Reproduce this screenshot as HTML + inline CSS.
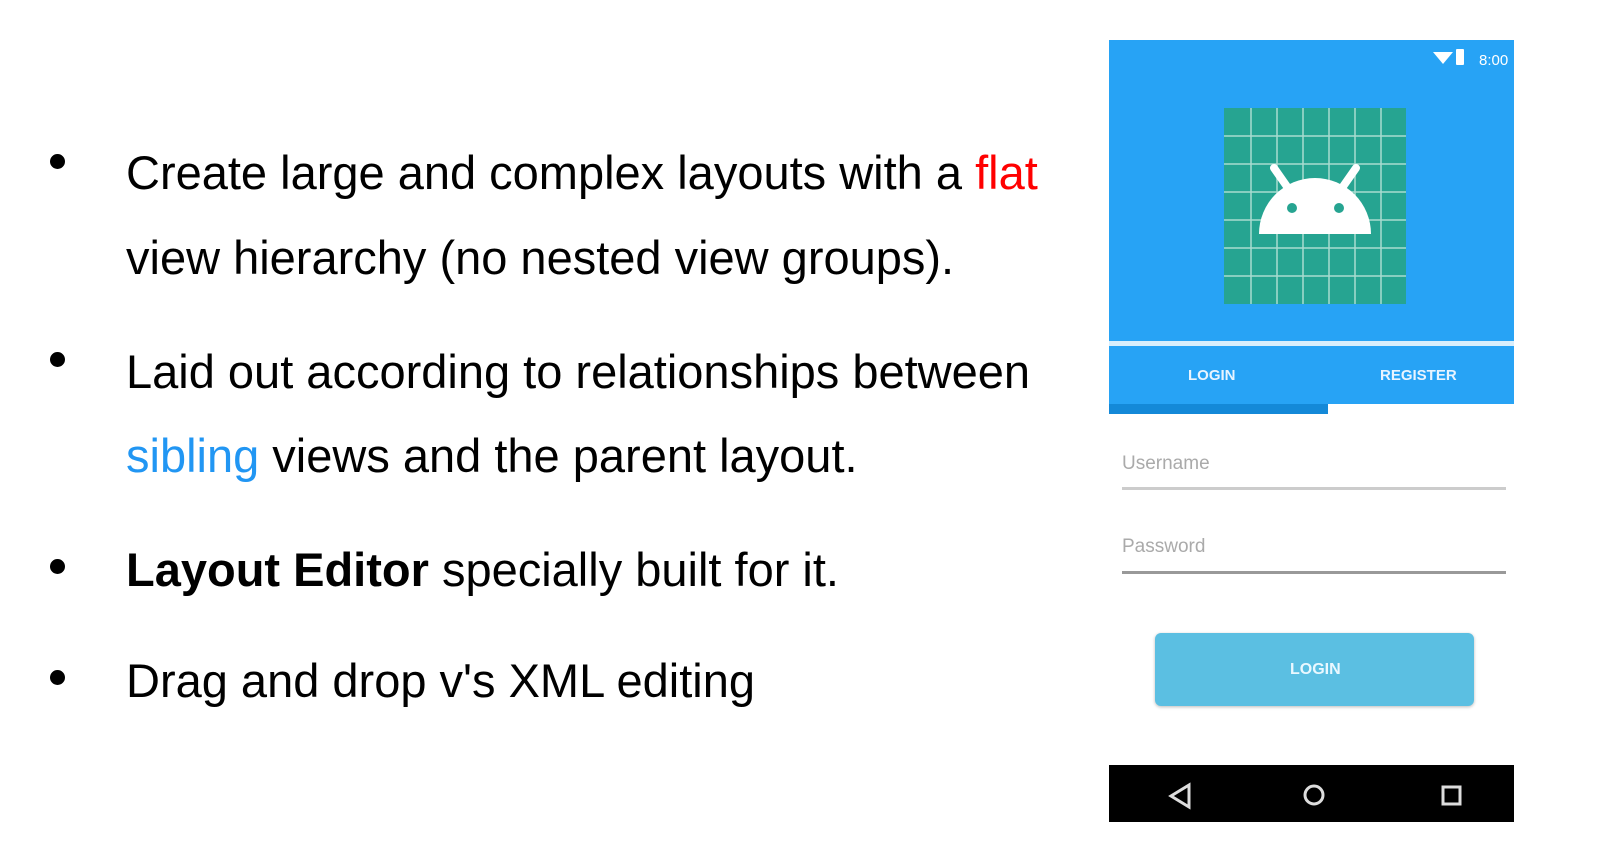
<!DOCTYPE html>
<html><head><style>
body{margin:0;width:1597px;height:841px;background:#fff;position:relative;overflow:hidden;font-family:"Liberation Sans",sans-serif;}
.t{position:absolute;left:126px;font-size:47px;color:#000;white-space:nowrap;line-height:1;}
.b{position:absolute;left:50px;width:15px;height:15px;border-radius:50%;background:#000;}
.ph{position:absolute;left:1109px;top:40px;width:405px;height:782px;background:#fff;overflow:hidden;}
.tb{position:absolute;color:#e8f4ff;font-size:15px;font-weight:bold;}
</style></head><body>
<div class="b" style="top:154px"></div>
<div class="t" style="top:149px">Create large and complex layouts with a <span style="color:#f00">flat</span></div>
<div class="t" style="top:234px">view hierarchy (no nested view groups).</div>
<div class="b" style="top:352px"></div>
<div class="t" style="top:348px">Laid out according to relationships between</div>
<div class="t" style="top:432px"><span style="color:#2196f3">sibling</span> views and the parent layout.</div>
<div class="b" style="top:559px"></div>
<div class="t" style="top:546px"><b>Layout Editor</b> specially built for it.</div>
<div class="b" style="top:670px"></div>
<div class="t" style="top:657px">Drag and drop v's XML editing</div>

<div class="ph">
 <div style="position:absolute;left:0;top:0;width:405px;height:301px;background:#27a3f5"></div>
 <div style="position:absolute;left:0;top:301px;width:405px;height:5px;background:#d8eefc"></div>
 <div style="position:absolute;left:0;top:306px;width:405px;height:58px;background:#27a3f5"></div>
 <div style="position:absolute;left:0;top:364px;width:219px;height:10px;background:#1489d8"></div>
 <div class="tb" style="left:79px;top:327px">LOGIN</div>
 <div class="tb" style="left:271px;top:327px">REGISTER</div>
 <svg style="position:absolute;left:320px;top:6px" width="90" height="24"><path d="M4 6 L24 6 L14 18Z" fill="#fff"/><rect x="27" y="3" width="8" height="16" rx="1" fill="#fff"/><text x="50" y="19" fill="#fff" font-size="15" font-family="Liberation Sans">8:00</text></svg>
 <svg style="position:absolute;left:115px;top:68px" width="182" height="196" viewBox="0 0 182 196">
  <rect width="182" height="196" fill="#26a491"/>
  <g stroke="#a8dcd0" stroke-width="1.5">
   <path d="M27 0V196M53 0V196M79 0V196M105 0V196M131 0V196M157 0V196"/>
   <path d="M0 28H182M0 56H182M0 84H182M0 112H182M0 140H182M0 168H182"/>
  </g>
  <path d="M35 126 A56 56 0 0 1 147 126Z" fill="#fff"/>
  <path d="M50 60 L64 80 M132 60 L118 80" stroke="#fff" stroke-width="8" stroke-linecap="round"/>
  <circle cx="68" cy="100" r="5" fill="#26a491"/><circle cx="115" cy="100" r="5" fill="#26a491"/>
 </svg>
 <div style="position:absolute;left:13px;top:413px;color:#aaa;font-size:19px">Username</div>
 <div style="position:absolute;left:13px;top:447px;width:384px;height:3px;background:#ccc"></div>
 <div style="position:absolute;left:13px;top:496px;color:#aaa;font-size:19px">Password</div>
 <div style="position:absolute;left:13px;top:531px;width:384px;height:3px;background:#999"></div>
 <div style="position:absolute;left:46px;top:593px;width:319px;height:73px;background:#5bbfe2;border-radius:6px;box-shadow:0 1px 3px #bbb"></div>
 <div style="position:absolute;left:181px;top:621px;color:#eaf8ff;font-size:16px;font-weight:bold">LOGIN</div>
 <div style="position:absolute;left:0;top:725px;width:405px;height:57px;background:#000"></div>
 <svg style="position:absolute;left:0;top:725px" width="405" height="57">
  <path d="M80 45 L62 56 L80 67Z" transform="translate(0,-25)" fill="none" stroke="#ddd" stroke-width="3"/>
  <circle cx="205" cy="30" r="9" fill="none" stroke="#ddd" stroke-width="3"/>
  <rect x="334" y="22" width="17" height="17" fill="none" stroke="#ddd" stroke-width="3"/>
 </svg>
</div>
</body></html>
